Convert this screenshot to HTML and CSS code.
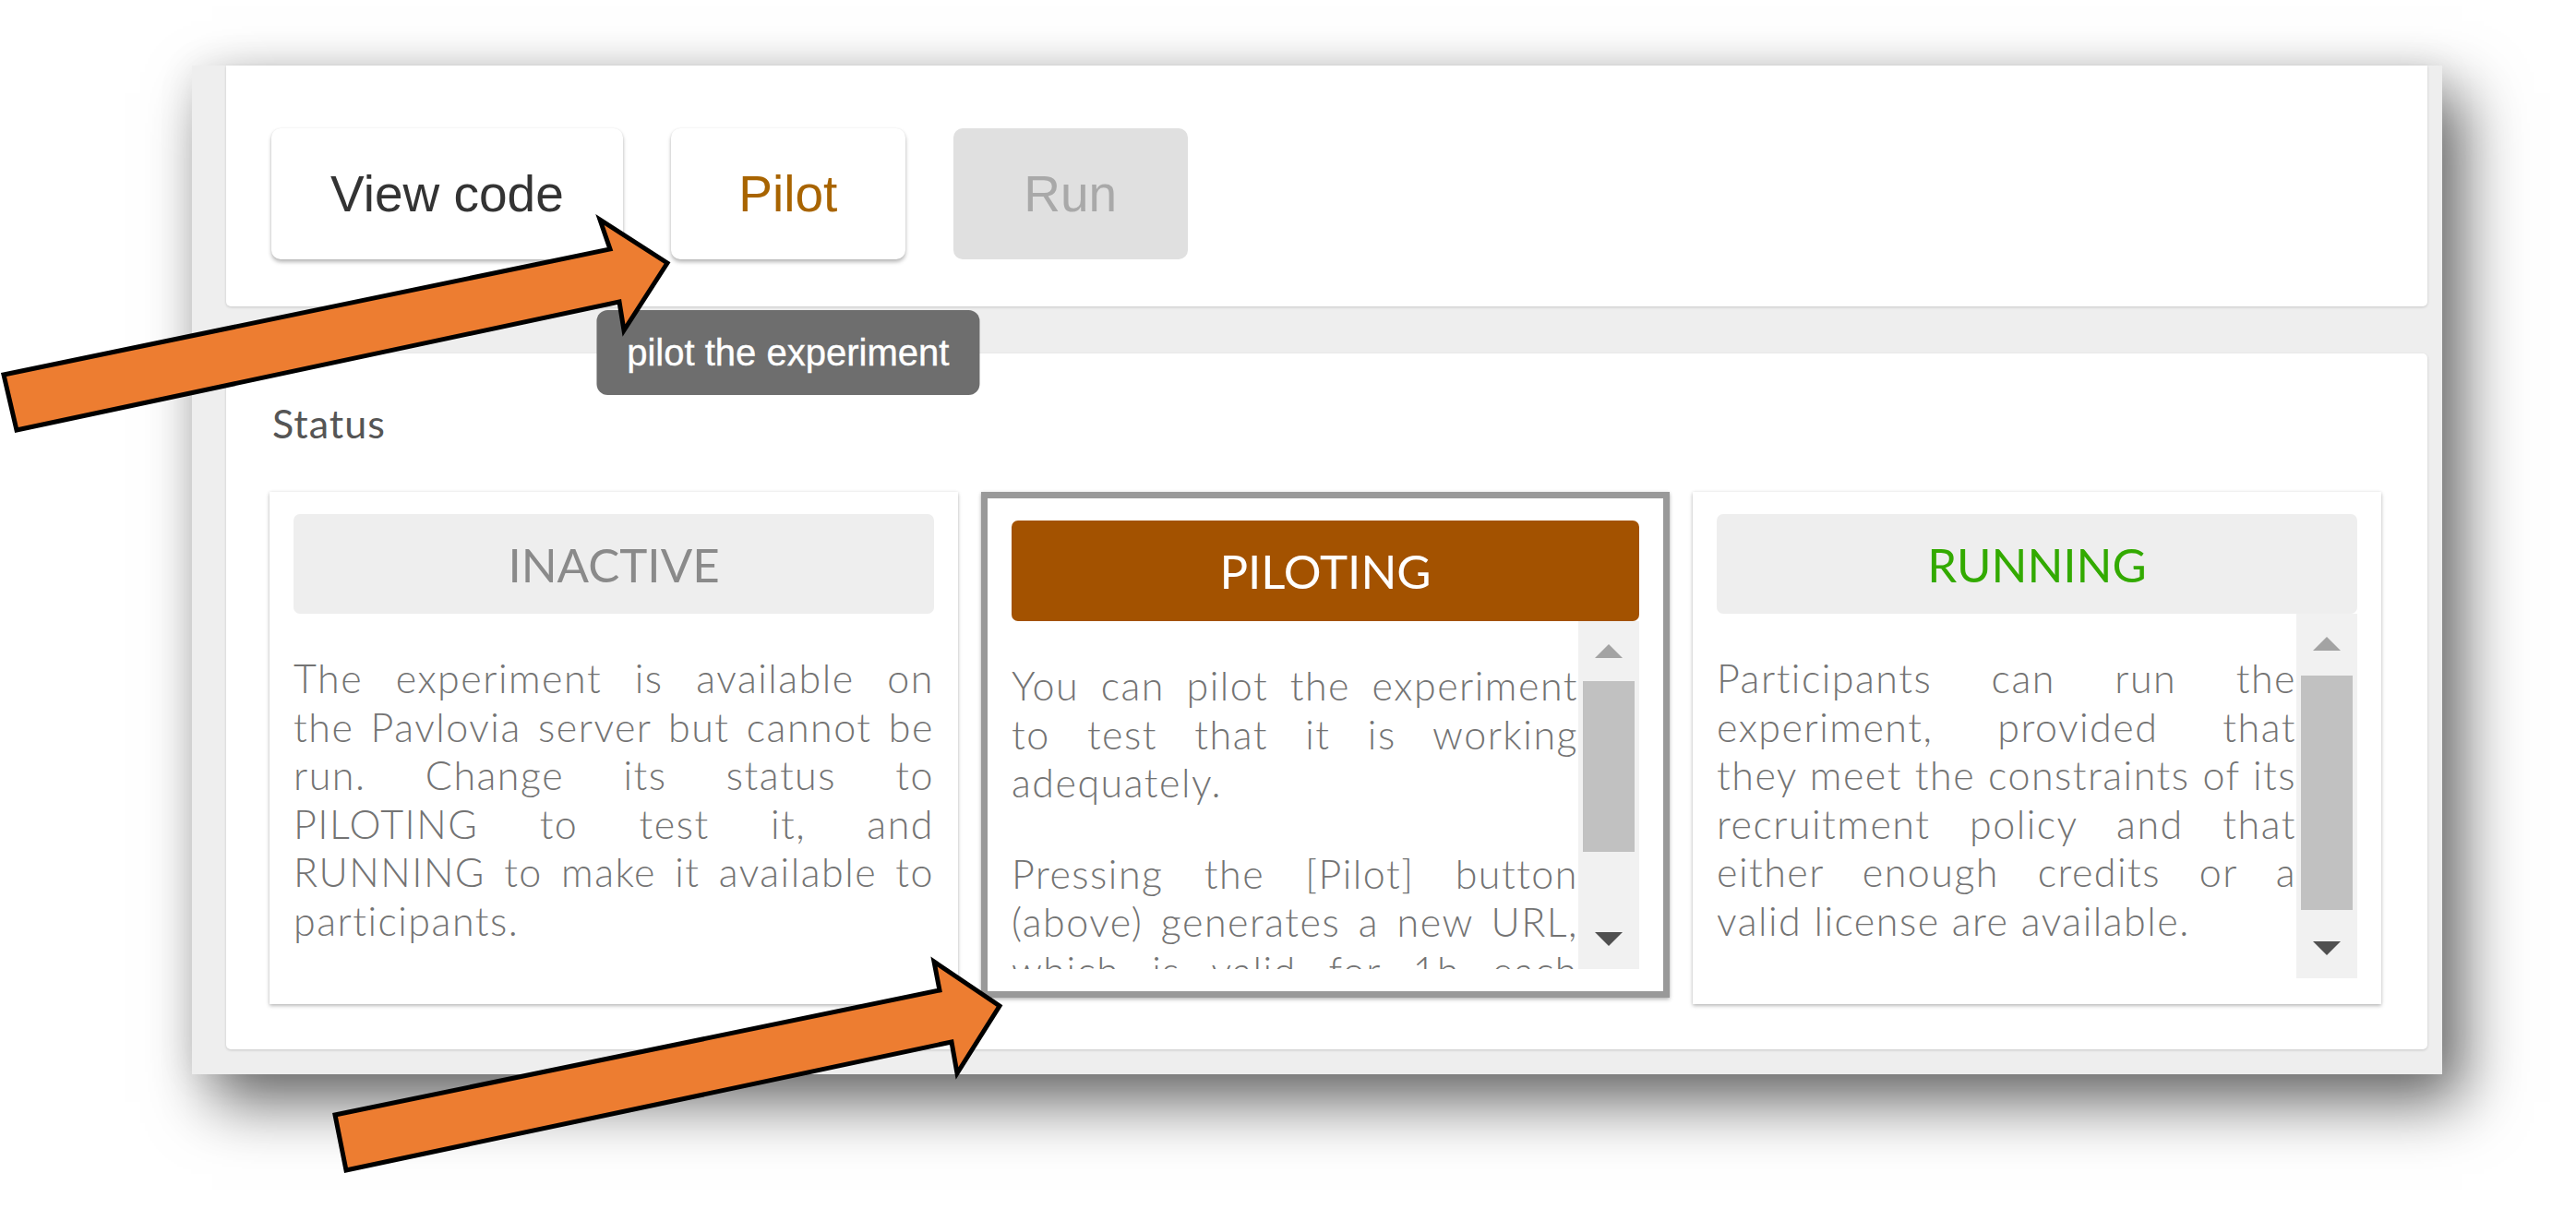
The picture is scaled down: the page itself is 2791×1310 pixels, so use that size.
FILE: index.html
```html
<!DOCTYPE html>
<html lang="en">
<head>
<meta charset="utf-8">
<title>Experiment status</title>
<link rel="stylesheet" href="styles.css">
</head>
<body>
<div class="stage">
  <div class="shot">
    <section class="panel actions">
      <button class="btn">View code</button>
      <div class="btn-wrap">
        <button class="btn btn-pilot">Pilot</button>
        <div class="tooltip">pilot the experiment</div>
      </div>
      <button class="btn btn-run">Run</button>
    </section>

    <section class="panel status">
      <div class="status-label">Status</div>
      <div class="cards">
        <div class="card">
          <div class="card-head inactive">INACTIVE</div>
          <div class="card-body">
            <div class="txt">
              <p>
                <span class="ln">The experiment is available on</span>
                <span class="ln">the Pavlovia server but cannot be</span>
                <span class="ln">run. Change its status to</span>
                <span class="ln">PILOTING to test it, and</span>
                <span class="ln">RUNNING to make it available to</span>
                <span class="ln end">participants.</span>
              </p>
            </div>
          </div>
        </div>

        <div class="card selected">
          <div class="card-head piloting">PILOTING</div>
          <div class="card-body">
            <div class="txt">
              <p>
                <span class="ln">You can pilot the experiment</span>
                <span class="ln">to test that it is working</span>
                <span class="ln end">adequately.</span>
              </p>
              <p>
                <span class="ln">Pressing the [Pilot] button</span>
                <span class="ln">(above) generates a new URL,</span>
                <span class="ln">which is valid for 1h each</span>
                <span class="ln end">time it is pressed.</span>
              </p>
            </div>
            <div class="sb">
              <div class="sb-btn"><span class="tri-up"></span></div>
              <div class="sb-track"><div class="sb-thumb" style="height:185px"></div></div>
              <div class="sb-btn"><span class="tri-down"></span></div>
            </div>
          </div>
        </div>

        <div class="card">
          <div class="card-head running">RUNNING</div>
          <div class="card-body">
            <div class="txt">
              <p>
                <span class="ln">Participants can run the</span>
                <span class="ln">experiment, provided that</span>
                <span class="ln">they meet the constraints of its</span>
                <span class="ln">recruitment policy and that</span>
                <span class="ln">either enough credits or a</span>
                <span class="ln end">valid license are available.</span>
              </p>
            </div>
            <div class="sb">
              <div class="sb-btn"><span class="tri-up"></span></div>
              <div class="sb-track"><div class="sb-thumb" style="margin-top:2px;height:254px"></div></div>
              <div class="sb-btn"><span class="tri-down"></span></div>
            </div>
          </div>
        </div>
      </div>
    </section>
  </div>

  <svg class="arrows" width="2791" height="1310" viewBox="0 0 2791 1310" aria-hidden="true">
    <polygon points="4,406 661,270 650,238 723,285 676,358 671,327 18,466"/>
    <polygon points="363,1208 1018,1073 1012,1042 1083,1090 1037,1163 1031,1129 375,1268"/>
  </svg>
</div>
</body>
</html>
```

FILE: styles.css
```css
* { box-sizing: border-box; }

html, body {
  margin: 0;
  padding: 0;
  background: #ffffff;
}

body {
  width: 2791px;
  height: 1310px;
  overflow: hidden;
  font-family: Lato, "Open Sans", sans-serif;
}

.stage {
  position: relative;
  width: 2791px;
  height: 1310px;
  padding: 71px 0 0 208px;
}

.shot {
  width: 2438px;
  height: 1093px;
  background: #eeeeee;
  padding: 0 16px 27px 37px;
  display: flex;
  flex-direction: column;
  gap: 51px;
  box-shadow: 22px 30px 64px rgba(0, 0, 0, 0.6), 0 0 40px rgba(0, 0, 0, 0.07);
}

.panel {
  background: #ffffff;
  box-shadow: 0 1px 3px rgba(0, 0, 0, 0.16);
}

/* top action bar */
.actions {
  height: 261px;
  flex: none;
  display: flex;
  align-items: flex-start;
  gap: 52px;
  padding: 68px 0 0 49px;
  border-radius: 0 0 5px 5px;
}

.btn {
  height: 142px;
  min-width: 254px;
  padding: 0 64px;
  border: 0;
  border-radius: 10px;
  background: #ffffff;
  font-family: "Liberation Sans", Arial, sans-serif;
  font-size: 55px;
  color: #333333;
  box-shadow: 0 3px 4px rgba(0, 0, 0, 0.28), 0 0 2px rgba(0, 0, 0, 0.08);
}

.btn-pilot { color: #a86400; }

.btn-run {
  background: #e0e0e0;
  color: #a9a9a9;
  box-shadow: none;
}

.btn-wrap { position: relative; }

.tooltip {
  position: absolute;
  top: 197px;
  left: 50%;
  transform: translateX(-50%);
  height: 92px;
  padding: 0 33px;
  display: flex;
  align-items: center;
  white-space: nowrap;
  background: #6e6e6e;
  color: #ffffff;
  border-radius: 12px;
  font-family: "Liberation Sans", Arial, sans-serif;
  font-size: 40px;
  -webkit-text-stroke: 0.4px #ffffff;
}

/* status section */
.status {
  height: 754px;
  flex: none;
  padding: 50px 50px 0 47px;
  border-radius: 5px;
}

.status-label {
  font-size: 43px;
  line-height: 52px;
  color: #555555;
  margin-bottom: 48px;
  padding-left: 3px;
  letter-spacing: 1px;
}

.cards {
  display: grid;
  grid-template-columns: repeat(3, 1fr);
  gap: 25px;
  align-items: start;
}

.card {
  background: #ffffff;
  padding: 24px 26px 28px;
  box-shadow: 0 2px 4px rgba(0, 0, 0, 0.25), 0 0 3px rgba(0, 0, 0, 0.08);
}

.card.selected {
  border: 7px solid #999999;
  padding-bottom: 24px;
}

.card-head {
  height: 108px;
  border-radius: 7px;
  background: #eeeeee;
  display: flex;
  align-items: center;
  justify-content: center;
  font-size: 51px;
}

.selected .card-head { height: 109px; }

.inactive { color: #8a8a8a; }
.piloting { background: #a35200; color: #ffffff; }
.running { color: #33aa00; }

.card-body {
  height: 395px;
  display: flex;
}

.selected .card-body { height: 377px; }

.txt {
  flex: 1;
  min-width: 0;
  padding-top: 44px;
  overflow: hidden;
  font-size: 43px;
  line-height: 52.6px;
  font-weight: 300;
  letter-spacing: 1.5px;
  color: #737373;
  text-align: justify;
}

.txt p { margin: 0 0 46px; }

.ln {
  display: block;
  text-align-last: justify;
}

.ln.end { text-align-last: left; }

/* scrollbar */
.sb {
  width: 66px;
  flex: none;
  background: #f1f1f1;
  display: flex;
  flex-direction: column;
}

.sb-btn {
  height: 65px;
  flex: none;
  display: flex;
  align-items: center;
  justify-content: center;
}

.sb-track {
  flex: 1;
  padding: 0 5px;
}

.sb-thumb { background: #c1c1c1; }

.tri-up {
  width: 0;
  height: 0;
  border-left: 15px solid transparent;
  border-right: 15px solid transparent;
  border-bottom: 15px solid #a3a3a3;
}

.tri-down {
  width: 0;
  height: 0;
  border-left: 15px solid transparent;
  border-right: 15px solid transparent;
  border-top: 15px solid #505050;
}

/* annotation arrows */
.arrows {
  position: absolute;
  top: 0;
  left: 0;
  pointer-events: none;
}

.arrows polygon {
  fill: #ed7d31;
  stroke: #000000;
  stroke-width: 5;
  stroke-linejoin: miter;
}
```
